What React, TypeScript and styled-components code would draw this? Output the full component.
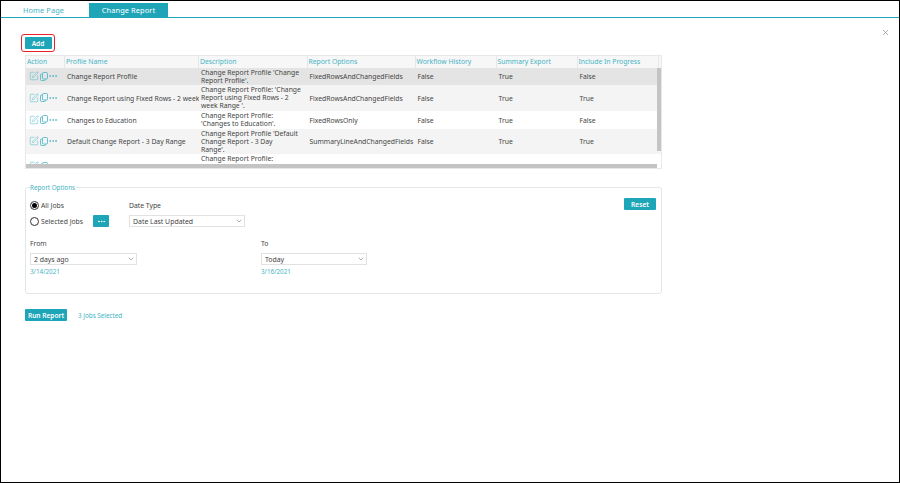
import React from 'react'
import styled, { createGlobalStyle } from 'styled-components'
import { ChevronDown, Ellipsis, SquarePen, X } from 'lucide-react'

const teal = '#1fa5b8'
const lightTeal = '#45b3c4'
const text = '#444'

const GlobalStyle = createGlobalStyle`
  html, body {
    margin: 0;
    padding: 0;
    background: #fff;
  }

  body {
    font-family: "Noto Sans", Tahoma, sans-serif;
    font-size: 6.8px;
    color: ${text};
  }
`

const Frame = styled.div`
  width: 900px;
  height: 483px;
  box-sizing: border-box;
  border: 1px solid #000;
  overflow: hidden;
`

const TabBar = styled.div`
  display: flex;
  height: 15px;
  margin-top: 2px;
  padding-left: 1px;
  box-sizing: border-box;
  border-bottom: 1px solid ${teal};
`

const Tab = styled.div<{ $active?: boolean }>`
  width: ${props => (props.$active ? '79px' : '83px')};
  margin-right: ${props => (props.$active ? '0' : '4px')};
  display: flex;
  align-items: center;
  justify-content: center;
  font-size: 7.4px;
  letter-spacing: 0.1px;
  color: ${props => (props.$active ? '#fff' : lightTeal)};
  background: ${props => (props.$active ? teal : 'transparent')};
`

const Body = styled.div`
  display: flex;
  padding: 16px 0 0 24px;
`

const Main = styled.div`
  width: 637px;
  flex-shrink: 0;
`

const CloseButton = styled.div`
  margin: -6px 0 0 219px;
  height: 9px;
  color: #666;
  display: flex;
`

const AddOutline = styled.div`
  width: 34px;
  height: 18px;
  margin: 0 0 3px -4px;
  box-sizing: border-box;
  border: 1px solid #e8212b;
  border-radius: 3px;
  display: flex;
  align-items: center;
  justify-content: center;
`

const TealButton = styled.button<{ $width: number }>`
  width: ${props => props.$width}px;
  height: 12px;
  padding: 0;
  border: 0;
  border-radius: 1px;
  background: ${teal};
  color: #fff;
  font-family: inherit;
  font-size: 6.6px;
  font-weight: 600;
  white-space: nowrap;
  display: flex;
  align-items: center;
  justify-content: center;
`

const TableWrap = styled.div`
  position: relative;
  height: 114px;
  box-sizing: border-box;
  border: 1px solid #e8e8e8;
  overflow: hidden;
`

const Row = styled.div<{ $height: number; $bg: string }>`
  display: grid;
  grid-template-columns: 39px 134px 108.5px 108px 81px 81px 81px;
  height: ${props => props.$height}px;
  background: ${props => props.$bg};
  flex-shrink: 0;
`

const HeadCell = styled.div`
  display: flex;
  align-items: center;
  padding: 0 0 2px 1px;
  color: ${lightTeal};
  border-right: 1px solid #e6e6e6;
  white-space: nowrap;
`

const Cell = styled.div`
  display: flex;
  align-items: center;
  padding-left: 2px;
  white-space: nowrap;
  overflow: hidden;
`

const DescCell = styled(Cell)<{ $clipped?: boolean }>`
  white-space: pre-line;
  line-height: 8px;
  padding-right: 1px;
  align-items: ${props => (props.$clipped ? 'flex-start' : 'center')};
  padding-top: ${props => (props.$clipped ? '1px' : '0')};
`

const ActionCell = styled(Cell)`
  color: ${lightTeal};
  padding: 0 0 1px 3px;
`

const CopyIcon = styled.svg`
  width: 8px;
  height: 9px;
  margin: 0 0 0 1px;
  fill: none;
  stroke: currentColor;
  stroke-width: 0.8;
`

const VScroll = styled.div`
  position: absolute;
  top: 12px;
  right: 0;
  width: 4px;
  height: 83px;
  background: #c4c4c4;
`

const HScroll = styled.div`
  position: absolute;
  left: 0;
  right: 4px;
  bottom: 0;
  height: 4px;
  background: #c4c4c4;
`

const Fieldset = styled.fieldset`
  margin: 14px 0 0;
  padding: 6px 4px 0;
  height: 111px;
  box-sizing: border-box;
  border: 1px solid #e2e8ea;
  border-radius: 3px;
  position: relative;
`

const Legend = styled.legend`
  padding: 0 1px 0 0;
  color: ${lightTeal};
  font-size: 6.3px;
`

const TopRow = styled.div`
  display: flex;
`

const RadioColumn = styled.div`
  width: 99px;
  display: flex;
  flex-direction: column;
  gap: 4.5px;
  padding-top: 2px;
`

const RadioLine = styled.div`
  display: flex;
  align-items: center;
  height: 11px;
  gap: 2px;
`

const Radio = styled.span<{ $checked?: boolean }>`
  width: 9px;
  height: 9px;
  box-sizing: border-box;
  border: 1px solid #333;
  border-radius: 50%;
  display: flex;
  align-items: center;
  justify-content: center;

  &::after {
    content: '';
    width: 5px;
    height: 5px;
    border-radius: 50%;
    background: ${props => (props.$checked ? '#000' : 'transparent')};
  }
`

const DotsButton = styled(TealButton)`
  margin-left: 8px;
`

const ResetButton = styled(TealButton)`
  position: absolute;
  top: 6px;
  right: 5px;
`

const DateTypeColumn = styled.div`
  padding-top: 3px;
`

const Label = styled.div`
  height: 10px;
  line-height: 10px;
`

const Select = styled.div<{ $width: number }>`
  width: ${props => props.$width}px;
  height: 12px;
  box-sizing: border-box;
  border: 1px solid #e2e2e2;
  padding: 0 1px 0 3px;
  margin-top: 4px;
  font-size: 6.9px;
  display: flex;
  align-items: center;
  justify-content: space-between;
  color: ${text};
`

const DateRow = styled.div`
  display: grid;
  grid-template-columns: 231px 1fr;
  margin-top: 12px;
`

const DateValue = styled.div`
  margin-top: 2px;
  color: ${lightTeal};
  font-size: 6.3px;
`

const Footer = styled.div`
  display: flex;
  align-items: center;
  gap: 11px;
  margin-top: 15px;
`

const SelectedCount = styled.div`
  color: ${lightTeal};
  font-size: 6.3px;
`

const rows = [
  {
    height: 17, bg: '#e4e4e4', name: 'Change Report Profile',
    desc: "Change Report Profile 'Change\nReport Profile'.",
    opt: 'FixedRowsAndChangedFields', history: 'False', summary: 'True', progress: 'False'
  },
  {
    height: 26, bg: '#f4f4f4', name: 'Change Report using Fixed Rows - 2 week Range',
    desc: "Change Report Profile: 'Change\nReport using Fixed Rows - 2\nweek Range '.",
    opt: 'FixedRowsAndChangedFields', history: 'False', summary: 'True', progress: 'True'
  },
  {
    height: 18, bg: '#fff', name: 'Changes to Education',
    desc: "Change Report Profile:\n'Changes to Education'.",
    opt: 'FixedRowsOnly', history: 'False', summary: 'True', progress: 'False'
  },
  {
    height: 25, bg: '#f4f4f4', name: 'Default Change Report - 3 Day Range',
    desc: "Change Report Profile 'Default\nChange Report - 3 Day\nRange'.",
    opt: 'SummaryLineAndChangedFields', history: 'False', summary: 'True', progress: 'True'
  },
  {
    height: 25, bg: '#fff', name: '',
    desc: 'Change Report Profile:',
    opt: '', history: '', summary: '', progress: '', clipped: true
  }
]

const headers = ['Action', 'Profile Name', 'Description', 'Report Options', 'Workflow History', 'Summary Export', 'Include In Progress']

const App: React.FC = () => {
  return (
    <Frame>
      <GlobalStyle />
      <TabBar>
        <Tab>Home Page</Tab>
        <Tab $active>Change Report</Tab>
      </TabBar>
      <Body>
        <Main>
          <AddOutline>
            <TealButton $width={27}>Add</TealButton>
          </AddOutline>
          <TableWrap>
            <Row $height={12} $bg="#f7f7f7">
              {headers.map(header => (
                <HeadCell key={header}>{header}</HeadCell>
              ))}
            </Row>
            {rows.map((row, index) => (
              <Row key={index} $height={row.height} $bg={row.bg}>
                <ActionCell>
                  <SquarePen size={10} strokeWidth={1.2} />
                  <CopyIcon viewBox="0 0 8 9">
                    <rect x="2.5" y="0.5" width="5" height="6.5" rx="1" />
                    <path d="M2.5 2H1.5a1 1 0 0 0-1 1v4.5a1 1 0 0 0 1 1h3a1 1 0 0 0 1-1V7" />
                  </CopyIcon>
                  <Ellipsis size={10} strokeWidth={2} />
                </ActionCell>
                <Cell>{row.name}</Cell>
                <DescCell $clipped={row.clipped}>{row.desc}</DescCell>
                <Cell>{row.opt}</Cell>
                <Cell>{row.history}</Cell>
                <Cell>{row.summary}</Cell>
                <Cell>{row.progress}</Cell>
              </Row>
            ))}
            <VScroll />
            <HScroll />
          </TableWrap>
          <Fieldset>
            <Legend>Report Options</Legend>
            <ResetButton $width={32}>Reset</ResetButton>
            <TopRow>
              <RadioColumn>
                <RadioLine><Radio $checked />All Jobs</RadioLine>
                <RadioLine>
                  <Radio />Selected Jobs
                  <DotsButton $width={16}><Ellipsis size={9} strokeWidth={2.5} /></DotsButton>
                </RadioLine>
              </RadioColumn>
              <DateTypeColumn>
                <Label>Date Type</Label>
                <Select $width={116}>Date Last Updated<ChevronDown size={8} color="#888" /></Select>
              </DateTypeColumn>
            </TopRow>
            <DateRow>
              <div>
                <Label>From</Label>
                <Select $width={107}>2 days ago<ChevronDown size={8} color="#888" /></Select>
                <DateValue>3/14/2021</DateValue>
              </div>
              <div>
                <Label>To</Label>
                <Select $width={106}>Today<ChevronDown size={8} color="#888" /></Select>
                <DateValue>3/16/2021</DateValue>
              </div>
            </DateRow>
          </Fieldset>
          <Footer>
            <TealButton $width={42}>Run Report</TealButton>
            <SelectedCount>3 Jobs Selected</SelectedCount>
          </Footer>
        </Main>
        <CloseButton><X size={9} strokeWidth={1.4} /></CloseButton>
      </Body>
    </Frame>
  )
}

export default App
